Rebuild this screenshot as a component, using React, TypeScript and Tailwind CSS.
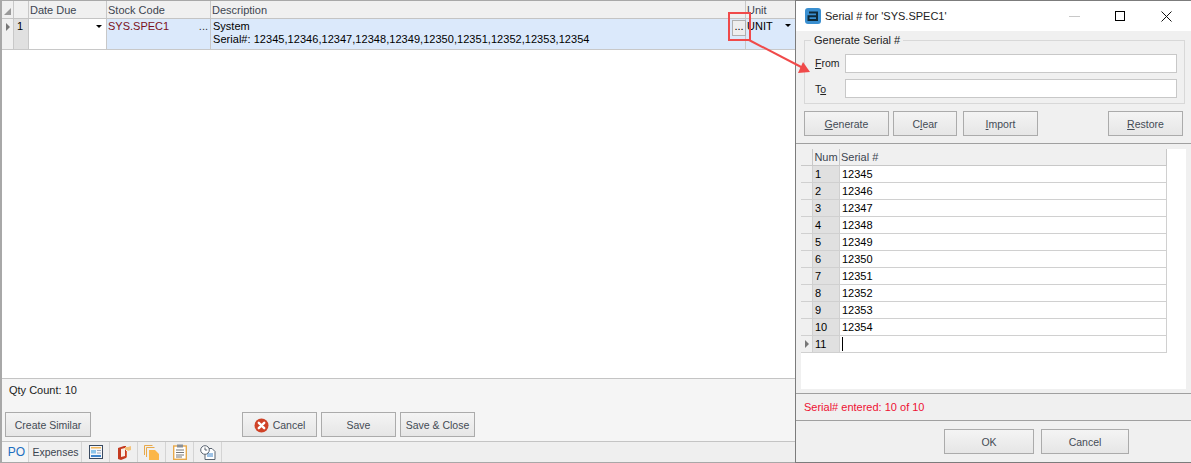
import React from "react";

const font = "[font-family:'Liberation_Sans',Arial,sans-serif]";

function Btn({ className = "", children }: { className?: string; children: React.ReactNode }) {
  return (
    <div className={`flex h-[25px] items-center justify-center border border-[#ababab] bg-gradient-to-b from-[#f4f4f4] to-[#e6e6e6] pt-px text-[10.5px] text-[#444b55] ${className}`}>
      {children}
    </div>
  );
}

function Tri({ className = "" }: { className?: string }) {
  return <div className={`h-0 w-0 border-x-[3px] border-t-[3px] border-x-transparent border-t-black ${className}`} />;
}

function Arrow() {
  return <div className="h-0 w-0 border-y-[4px] border-l-[4px] border-y-transparent border-l-[#777]" />;
}

const serials = ["12345", "12346", "12347", "12348", "12349", "12350", "12351", "12352", "12353", "12354", ""];

function TabIcon({ children }: { children: React.ReactNode }) {
  return <div className="flex h-full w-[28px] items-center justify-center border-r border-[#d4d4d4]">{children}</div>;
}

export default function App() {
  return (
    <div className={`relative flex h-[463px] w-[1191px] overflow-hidden bg-white text-[11px] leading-none text-black ${font}`}>
      {/* Left window */}
      <div className="flex h-full w-[795px] flex-col border-l-2 border-t border-b border-[#a8a8a8]">
        <div className="flex h-[18px] border-b border-[#c4c4c4] bg-[#f0f0f0] text-[#3c4550]">
          <div className="flex w-[12px] items-end justify-center border-r border-[#c8c8c8] pb-[3px]">
            <div className="h-0 w-0 border-b-[7px] border-l-[7px] border-b-[#9a9a9a] border-l-transparent" />
          </div>
          <div className="w-[15px] border-r border-[#c8c8c8]" />
          <div className="flex w-[78px] items-center border-r border-[#c8c8c8] pl-[1px] pt-px">Date Due</div>
          <div className="flex w-[104px] items-center border-r border-[#c8c8c8] pl-[1px] pt-px">Stock Code</div>
          <div className="flex w-[535px] items-center border-r border-[#c8c8c8] pl-[1px] pt-px">Description</div>
          <div className="flex flex-1 items-center pl-[1px] pt-px">Unit</div>
        </div>
        <div className="flex h-[31px] border-b border-[#c8c8c8]">
          <div className="flex w-[12px] items-start justify-center border-r border-[#c8c8c8] bg-[#f0f0f0] pt-[4px]"><Arrow /></div>
          <div className="w-[15px] border-r border-[#c8c8c8] bg-[#e0e0e0] pt-[2px] pl-[3px]">1</div>
          <div className="flex w-[78px] justify-end border-r border-[#c8c8c8] bg-white pt-[6px] pr-[4px]"><Tri /></div>
          <div className="flex w-[104px] justify-between border-r border-[#c8c8c8] bg-[#dbe9fb] pt-[2px] pl-[1px] pr-[2px] text-[#7a1020]">
            <span>SYS.SPEC1</span><span className="text-[#333]">...</span>
          </div>
          <div className="relative w-[535px] border-r border-[#c8c8c8] bg-[#dbe9fb] pl-[2px] pt-[2px]">
            <div>System</div>
            <div className="mt-[2px] tracking-[0.04px]">Serial#: 12345,12346,12347,12348,12349,12350,12351,12352,12353,12354</div>
            <div className="absolute right-[-1px] top-[1px] flex h-[16px] w-[14px] items-center justify-center border border-[#b0b0b0] bg-[#eeeeee] pb-[3px]">...</div>
          </div>
          <div className="flex flex-1 justify-between bg-[#dbe9fb] pt-[2px] pl-[1px] pr-[4px]">
            <span>UNIT</span><Tri className="mt-[3px]" />
          </div>
        </div>
        <div className="flex-1 bg-white" />
        <div className="h-[63px] border-t border-[#c4c4c4] bg-[#f5f5f5] text-[#222]">
          <div className="pl-[7px] pt-[6px]">Qty Count: 10</div>
          <div className="mt-[16px] flex pl-[3px]">
            <Btn className="w-[86px]">Create Similar</Btn>
            <Btn className="ml-[151px] w-[75px] gap-[4px]">
              <svg width="15" height="15" viewBox="0 0 15 15"><circle cx="7.5" cy="7.5" r="7" fill="#cf4227" /><path d="M4.8 4.8l5.4 5.4M10.2 4.8l-5.4 5.4" stroke="#fff" strokeWidth="2.4" strokeLinecap="round" /></svg>
              Cancel
            </Btn>
            <Btn className="ml-[4px] w-[75px]">Save</Btn>
            <Btn className="ml-[4px] w-[75px]">Save &amp; Close</Btn>
          </div>
        </div>
        <div className="flex h-[21px] border-t border-[#c4c4c4] bg-[#efefef] text-[#3c4550]">
          <div className="flex w-[27px] items-center justify-center border-r border-[#d4d4d4] bg-[#f5f5f5] pl-[3px] text-[12px] text-[#1d6fc0]">PO</div>
          <div className="flex w-[53px] items-center justify-center border-r border-[#d4d4d4] pl-[1px] text-[10.5px]">Expenses</div>
          <TabIcon>
            <svg width="14" height="14" viewBox="0 0 14 14"><rect x="0.5" y="0.5" width="13" height="13" fill="#f4f6fa" stroke="#3a4a60" /><rect x="2" y="2" width="10" height="1.5" fill="#f4b85a" /><rect x="2" y="5" width="5" height="3.5" fill="#8cc4ea" /><rect x="8" y="5" width="4" height="1" fill="#9aa8bc" /><rect x="8" y="7.5" width="4" height="1" fill="#9aa8bc" /><rect x="2" y="10" width="10" height="2" fill="#3f86cc" /></svg>
          </TabIcon>
          <TabIcon>
            <svg width="14" height="15" viewBox="0 0 14 15"><path d="M1 3l6-2h2v12l-5 2-3-1z" fill="#c43a20" /><path d="M4 4l4-1v8l-4 1z" fill="#fbeee6" /><path d="M8 2h3l3-1v4l-3 1-1-1H8z" fill="#f3c27a" /><path d="M9 6h1v6l-1 1z" fill="#e2603a" /></svg>
          </TabIcon>
          <TabIcon>
            <svg width="16" height="15" viewBox="0 0 16 15"><path d="M0.5 10V0.5h8" stroke="#e8a94a" fill="none" /><path d="M2.5 12V2.5h8" stroke="#e8a94a" fill="none" /><path d="M5 5h6l4 4v6H5z" fill="#fbb648" /></svg>
          </TabIcon>
          <TabIcon>
            <svg width="14" height="16" viewBox="0 0 14 16"><rect x="0.7" y="2" width="12.6" height="13.3" fill="#fff" stroke="#e8a94a" strokeWidth="1.4" /><rect x="4" y="0.5" width="6" height="3" fill="#8a8f96" /><path d="M3 6h8M3 8.5h8M3 11h8M3 13h6" stroke="#777" /></svg>
          </TabIcon>
          <TabIcon>
            <svg width="16" height="15" viewBox="0 0 16 15"><path d="M6 3.5h6l3 3v8H5V9" fill="#fff" stroke="#5a6470" /><path d="M7 9h6M7 11h6" stroke="#3f86cc" /><circle cx="5" cy="5" r="4.3" fill="#fff" stroke="#5a6470" /><path d="M5 2.5V5h2.2" stroke="#5a6470" fill="none" /></svg>
          </TabIcon>
        </div>
      </div>

      {/* Dialog */}
      <div className="flex h-full w-[396px] flex-col border-y border-l border-[#7c7c7c] bg-[#f0f0f0]">
        <div className="flex h-[30px] items-center bg-white pl-[9px]">
          <svg width="16" height="16" viewBox="0 0 16 16">
            <rect width="16" height="16" rx="3" fill="#3a8fd0" />
            <path d="M4 4.5h8V12H3.5V8.3H12" fill="none" stroke="#0f2a38" strokeWidth="2" />
          </svg>
          <span className="ml-[4px] text-[#222]">Serial # for 'SYS.SPEC1'</span>
          <div className="ml-auto flex items-center pr-[19px]">
            <div className="h-px w-[11px] bg-[#c8c8c8]" />
            <div className="ml-[35px] h-[10px] w-[10px] border border-black" />
            <svg className="ml-[36px]" width="11" height="11" viewBox="0 0 11 11"><path d="M0.5 0.5l10 10M10.5 0.5l-10 10" stroke="#111" /></svg>
          </div>
        </div>
        <div className="relative ml-[8px] mt-[9px] flex h-[64px] w-[381px] flex-col gap-[6px] border border-[#d8d8d8] pl-[40px] pt-[13px]">
          <span className="absolute left-[6px] top-[-6px] bg-[#f0f0f0] px-[3px] text-[#222]">Generate Serial #</span>
          <div className="relative h-[19px] w-[332px] border border-[#c8c8c8] bg-white">
            <span className="absolute left-[-31px] top-[3px] text-[10.5px] text-[#222]"><u>F</u>rom</span>
          </div>
          <div className="relative h-[19px] w-[332px] border border-[#c8c8c8] bg-white">
            <span className="absolute left-[-31px] top-[4px] text-[10.5px] text-[#222]">T<u>o</u></span>
          </div>
        </div>
        <div className="ml-[8px] mr-[7px] mt-[7px] flex">
          <Btn className="w-[85px]"><span><u>G</u>enerate</span></Btn>
          <Btn className="ml-[4px] w-[64px]"><span>C<u>l</u>ear</span></Btn>
          <Btn className="ml-[6px] w-[75px]"><span><u>I</u>mport</span></Btn>
          <Btn className="ml-auto mr-[1px] w-[75px]"><span><u>R</u>estore</span></Btn>
        </div>
        <div className="mt-[7px] h-[2px] border-t border-[#a0a0a0]" />
        <div className="ml-[5px] mr-[5px] mt-[4px] h-[240px] bg-white">
          <div className="w-[366px]">
            <div className="flex h-[17px] border-b border-[#c8c8c8] bg-[#f0f0f0] text-[#3c4550]">
              <div className="w-[12px] border-r border-[#c8c8c8]" />
              <div className="flex w-[27px] items-center justify-center border-r border-[#c8c8c8] pt-px">Num</div>
              <div className="flex flex-1 items-center border-r border-[#c8c8c8] pl-[1px] pt-px">Serial #</div>
            </div>
            {serials.map((s, i) => (
              <div key={i} className="flex h-[17px] border-b border-[#d0d0d0]">
                <div className="flex w-[12px] items-center justify-center border-r border-[#d0d0d0] bg-[#f0f0f0]">{i === 10 && <Arrow />}</div>
                <div className="flex w-[27px] items-center border-r border-[#d0d0d0] bg-[#e0e0e0] pl-[2px]">{i + 1}</div>
                <div className="flex flex-1 items-center border-r border-[#d0d0d0] pl-[2px]">
                  {s}
                  {i === 10 && <div className="h-[14px] w-px bg-black" />}
                </div>
              </div>
            ))}
          </div>
        </div>
        <div className="mt-[4px] h-[28px] border-y border-[#a0a0a0] pl-[8px] pt-[8px] text-[#ee1133]">Serial# entered: 10 of 10</div>
        <div className="mt-[8px] flex pl-[148px]">
          <Btn className="w-[90px]">OK</Btn>
          <Btn className="ml-[7px] w-[88px]">Cancel</Btn>
        </div>
      </div>

      {/* Callout overlay */}
      <div className="absolute left-[728px] top-[12px] h-[29px] w-[23px] border-2 border-[#f04a4a]" />
      <svg className="absolute left-[745px] top-[38px]" width="70" height="40" viewBox="0 0 70 40">
        <path d="M4 2L60 31" stroke="#f04a4a" strokeWidth="2" />
        <path d="M65 34L53 35L58 24Z" fill="#f04a4a" />
      </svg>
    </div>
  );
}
